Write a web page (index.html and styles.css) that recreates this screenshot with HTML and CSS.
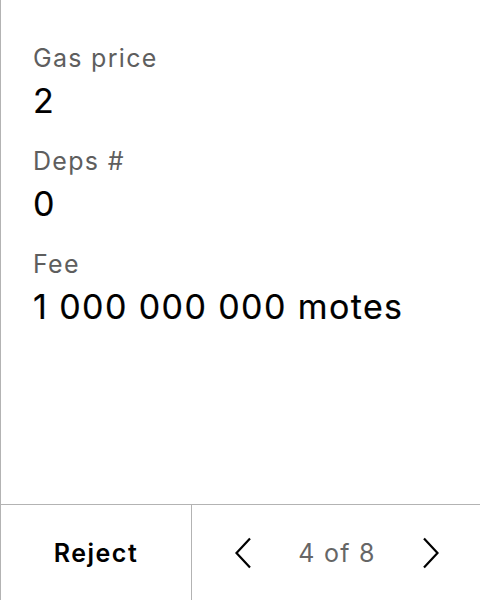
FILE: index.html
```html
<!DOCTYPE html>
<html>
<head>
<meta charset="utf-8">
<link rel="stylesheet" href="styles.css">
</head>
<body>
<div class="screen">
  <main class="content">
    <div class="field">
      <div class="label">Gas price</div>
      <div class="value">2</div>
    </div>
    <div class="field">
      <div class="label">Deps #</div>
      <div class="value">0</div>
    </div>
    <div class="field">
      <div class="label">Fee</div>
      <div class="value">1 000 000 000 motes</div>
    </div>
  </main>
  <footer class="footer">
    <button class="reject">Reject</button>
    <div class="pager">
      <svg class="chev" width="18" height="32" viewBox="0 0 18 32"><path d="M16 1.5 L2.5 16 L16 30.5" fill="none" stroke="#000" stroke-width="2.2"/></svg>
      <span class="count">4 of 8</span>
      <svg class="chev" width="18" height="32" viewBox="0 0 18 32"><path d="M2 1.5 L15.5 16 L2 30.5" fill="none" stroke="#000" stroke-width="2.2"/></svg>
    </div>
  </footer>
</div>
</body>
</html>
```
FILE: styles.css
```css
* { box-sizing: border-box; }
html, body { margin: 0; padding: 0; background: #fff; }
body { font-family: Inter, "Noto Sans", sans-serif; color: #000; }
.screen {
  width: 480px;
  height: 600px;
  border-left: 1px solid #b3b3b3;
  display: flex;
  flex-direction: column;
}
.content {
  flex: 1;
  padding: 40px 0 0 32px;
  display: flex;
  flex-direction: column;
  gap: 22px;
}
.label {
  font-size: 25px;
  line-height: 36px;
  letter-spacing: 1.3px;
  color: #5e5e5e;
}
.value {
  font-size: 34px;
  line-height: 40px;
  letter-spacing: 1.4px;
  color: #000;
  margin-top: 5px;
  -webkit-text-stroke: 0.2px #000;
}
.footer {
  height: 96px;
  border-top: 1px solid #b3b3b3;
  display: flex;
}
.reject {
  width: 191px;
  border: 0;
  border-right: 1px solid #b3b3b3;
  background: #fff;
  font-family: Inter, sans-serif;
  font-weight: 600;
  font-size: 25px;
  letter-spacing: 1.5px;
  color: #000;
  padding: 0;
}
.pager {
  flex: 1;
  display: flex;
  align-items: center;
  justify-content: space-between;
  padding: 0 40px 0 42px;
}
.count {
  font-size: 25px;
  letter-spacing: 1.3px;
  color: #666;
}
```
